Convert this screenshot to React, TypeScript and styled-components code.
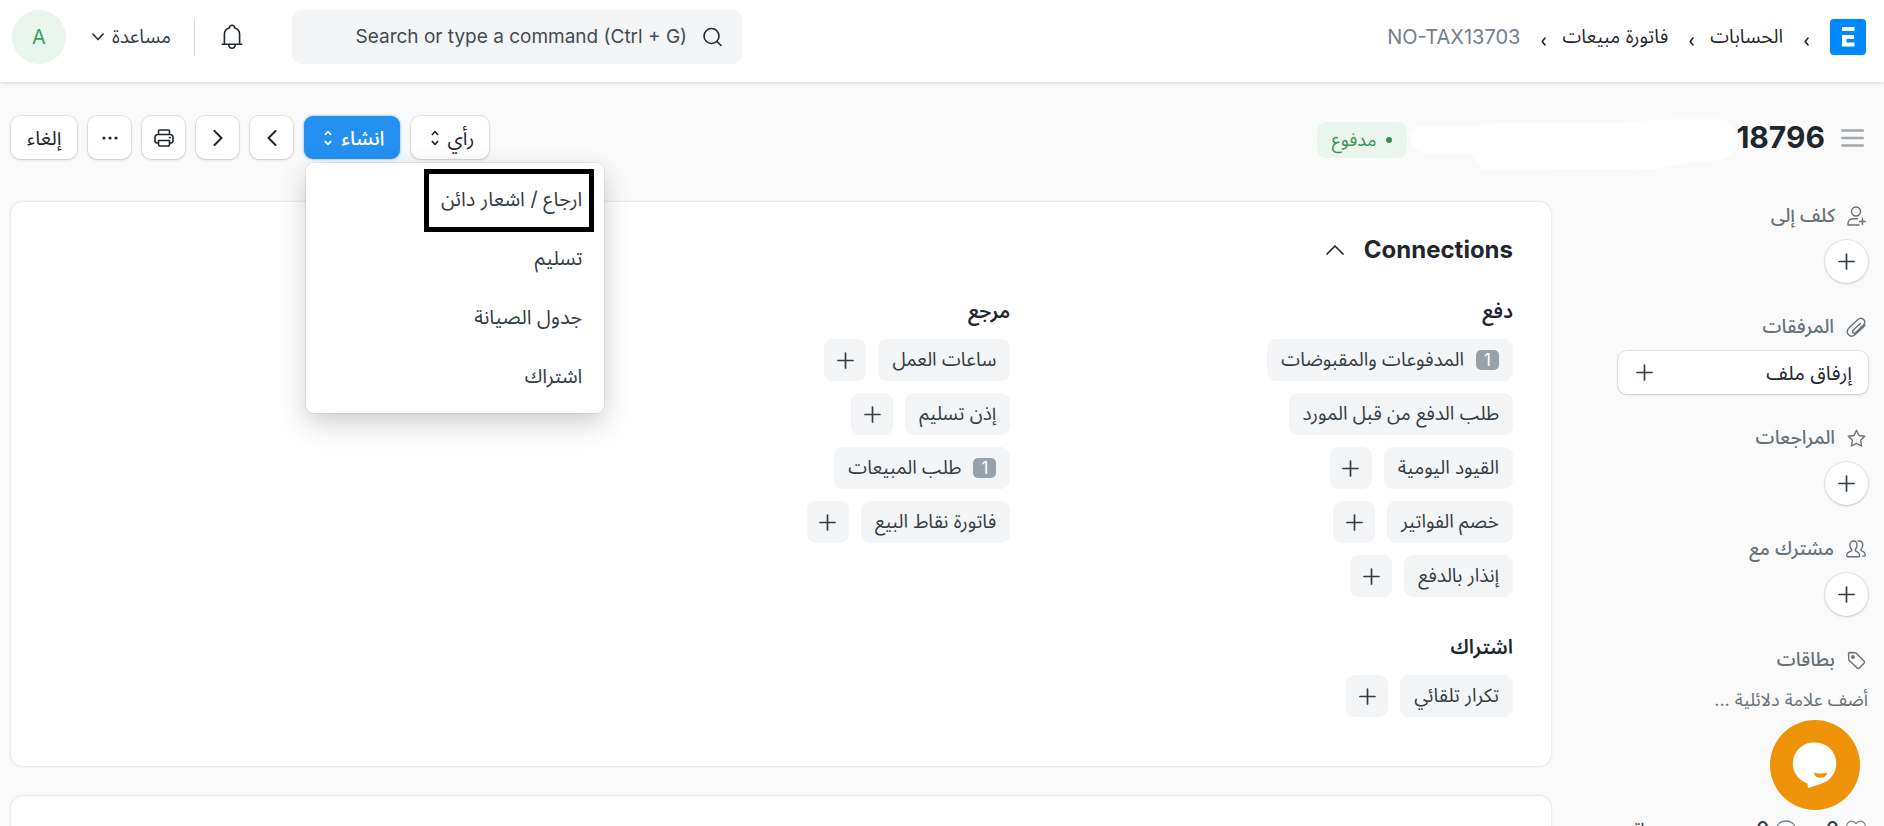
import React from "react";
import styled, { createGlobalStyle } from "styled-components";

const Global = createGlobalStyle`
  *, *::before, *::after { box-sizing: border-box; }
  body {
    margin: 0;
    background: #fafafa;
    color: #1f272e;
    font-family: Inter, "Noto Sans Arabic", "DejaVu Sans", sans-serif;
    font-size: 20px;
    line-height: 24px;
  }
  button, input { font: inherit; color: inherit; }
  button { cursor: pointer; padding: 0; border: 0; background: none; }
  a { color: inherit; text-decoration: none; }
  h1, h2, h3, p, ul { margin: 0; padding: 0; }
  ul { list-style: none; }
  svg { display: block; flex: none; }
`;

const Shell = styled.div`
  height: 100vh;
  overflow: hidden;
`;

const Header = styled.header`
  height: 82px;
  padding: 0 18px 8px 12px;
  display: flex;
  align-items: center;
  justify-content: space-between;
  background: #fff;
  box-shadow: 0 1px 4px rgba(0, 0, 0, 0.14);
`;

const Crumbs = styled.nav`
  display: flex;
  align-items: center;
  gap: 16px;
`;

const Logo = styled.a`
  display: block;
  margin-left: 5px;
`;

const Crumb = styled.a<{ $muted?: boolean }>`
  display: flex;
  align-items: center;
  gap: 21px;
  font-size: ${(p) => (p.$muted ? 20 : 19)}px;
  color: ${(p) => (p.$muted ? "#74808b" : "#1f272e")};
  svg { margin-top: 8px; color: #1f272e; }
`;

const HeaderTools = styled.div`
  display: flex;
  align-items: center;
`;

const SearchBox = styled.label`
  width: 450px;
  height: 54px;
  padding: 0 20px;
  display: flex;
  align-items: center;
  gap: 16px;
  border-radius: 9px;
  background: #f4f5f6;
  color: #1f272e;
`;

const SearchInput = styled.input`
  flex: 1;
  min-width: 0;
  padding: 0;
  border: 0;
  outline: 0;
  background: transparent;
  font-size: 19px;
  text-align: right;
  &::placeholder { color: #434a52; opacity: 1; }
`;

const BellButton = styled.button`
  margin: 0 49px 0 26px;
`;

const Divider = styled.span`
  width: 1px;
  height: 37px;
  background: #d5d9dd;
`;

const HelpButton = styled.button`
  margin: 0 23px 0 26px;
  display: flex;
  align-items: center;
  gap: 8px;
  font-size: 19px;
  color: #333c44;
`;

const Avatar = styled.button`
  width: 54px;
  height: 54px;
  border-radius: 50%;
  background: #eaf5ee;
  color: #38a160;
`;

const TitleBar = styled.div`
  height: 120px;
  padding: 34px 15px 0 11px;
  display: flex;
  align-items: flex-start;
  justify-content: space-between;
`;

const TitleGroup = styled.div`
  height: 43px;
  padding-right: 5px;
  display: flex;
  align-items: flex-start;
`;

const MenuToggle = styled.button`
  height: 43px;
  margin-left: 16px;
`;

const Title = styled.h1`
  font-size: 30px;
  line-height: 43px;
  font-weight: 700;
`;

const Redaction = styled.svg`
  margin: 2px 0 0 4px;
`;

const Status = styled.span`
  height: 36px;
  margin-top: 6px;
  padding: 0 15px;
  display: flex;
  align-items: center;
  gap: 10px;
  border-radius: 9px;
  background: #eaf5ee;
  color: #38915a;
  font-size: 18px;
  &::before {
    content: "";
    width: 6px;
    height: 6px;
    border-radius: 50%;
    background: currentColor;
  }
`;

const Actions = styled.div`
  display: flex;
  gap: 11px;
`;

const raised = `
  background: #fff;
  box-shadow: 0 0 0 1px rgba(0, 0, 0, 0.07), 0 1px 3px rgba(0, 0, 0, 0.14);
`;

const ActionButton = styled.button<{ $primary?: boolean; $caret?: boolean; $icon?: boolean }>`
  ${raised}
  height: 43px;
  min-width: 43px;
  padding: ${(p) => (p.$icon ? "0" : p.$caret ? "0 15px 0 20px" : "0 16px")};
  display: flex;
  align-items: center;
  justify-content: center;
  gap: 9px;
  border-radius: 9px;
  ${(p) =>
    p.$primary &&
    `
    background: #2490ef;
    color: #fff;
    font-weight: 500;
    box-shadow: 0 0 3px rgba(36, 144, 239, 0.7);
  `}
`;

const MenuAnchor = styled.div`
  position: relative;
`;

const Menu = styled.ul`
  position: absolute;
  z-index: 2;
  top: 47px;
  left: 2px;
  width: 298px;
  padding: 7px 0;
  border-radius: 8px;
  background: #fff;
  box-shadow: 0 0 0 1px rgba(0, 0, 0, 0.06), 0 10px 28px rgba(0, 0, 0, 0.2);
`;

const MenuItem = styled.li<{ $marked?: boolean }>`
  position: relative;
  height: 59px;
  ${(p) =>
    p.$marked &&
    `
    &::after {
      content: "";
      position: absolute;
      top: -1px;
      right: 10px;
      width: 170px;
      height: 63px;
      border: 5px solid #000;
      pointer-events: none;
    }
  `}
`;

const MenuLink = styled.a`
  display: block;
  padding: 0 22px;
  line-height: 59px;
  color: #333c44;
`;

const Body = styled.div`
  padding: 0 16px 0 11px;
  display: flex;
  gap: 67px;
`;

const Sidebar = styled.aside`
  width: 250px;
  flex: none;
`;

const SideSection = styled.section`
  height: 111px;
`;

const SideHeading = styled.h2`
  height: 28px;
  margin-bottom: 10px;
  padding-right: 2px;
  display: flex;
  align-items: center;
  gap: 12px;
  color: #687178;
  font-size: 19px;
  font-weight: 500;
`;

const RoundButton = styled.button`
  ${raised}
  width: 43px;
  height: 43px;
  display: flex;
  align-items: center;
  justify-content: center;
  border-radius: 50%;
`;

const AttachButton = styled.button`
  ${raised}
  width: 100%;
  height: 43px;
  padding: 0 16px 0 18px;
  display: flex;
  align-items: center;
  justify-content: space-between;
  border-radius: 9px;
`;

const TagHint = styled.p`
  margin: 14px 0 105px;
  font-size: 18px;
  color: #687178;
`;

const Stats = styled.div`
  display: flex;
  align-items: center;
  padding-right: 2px;
`;

const Stat = styled.button`
  display: flex;
  align-items: center;
  gap: 7px;
  margin-left: 30px;
  color: #74808b;
  b { color: #333c44; font-weight: 500; }
`;

const Follow = styled.button`
  margin-right: auto;
  font-size: 19px;
  color: #333c44;
`;

const Main = styled.main`
  flex: 1;
  min-width: 0;
  display: flex;
  flex-direction: column;
  gap: 30px;
`;

const Card = styled.section`
  min-height: 200px;
  padding: 36px 38px 49px;
  border-radius: 12px;
  background: #fff;
  box-shadow: 0 0 3px rgba(0, 0, 0, 0.16);
`;

const CardToggle = styled.button`
  margin-bottom: 37px;
  display: flex;
  align-items: center;
  gap: 20px;
  font-size: 24px;
  font-weight: 700;
`;

const Columns = styled.div`
  display: grid;
  grid-template-columns: repeat(3, 1fr);
  column-gap: 44px;
  align-items: start;
`;

const Column = styled.div`
  display: grid;
  gap: 38px;
`;

const GroupTitle = styled.h3`
  margin-bottom: 16px;
  font-size: 20px;
  font-weight: 600;
`;

const Links = styled.ul`
  display: grid;
  gap: 12px;
`;

const LinkRow = styled.li`
  display: flex;
  gap: 12px;
`;

const Chip = styled.a`
  height: 42px;
  padding: 0 14px;
  display: flex;
  align-items: center;
  gap: 12px;
  border-radius: 9px;
  background: #f4f5f6;
  color: #333c44;
  font-size: 19px;
`;

const Count = styled.span`
  width: 23px;
  height: 20px;
  border-radius: 5px;
  background: #98a1a9;
  color: #fff;
  font-size: 17px;
  line-height: 20px;
  text-align: center;
`;

const AddButton = styled.button`
  width: 42px;
  height: 42px;
  display: flex;
  align-items: center;
  justify-content: center;
  border-radius: 9px;
  background: #f4f5f6;
`;

const Chat = styled.button`
  position: fixed;
  right: 24px;
  bottom: 16px;
  width: 90px;
  height: 90px;
  border-radius: 50%;
  background: #ee9207;
`;

type IconProps = { w: number; h: number; sw?: number; children: React.ReactNode };
const Icon = ({ w, h, sw = 1.5, children }: IconProps) => (
  <svg
    width={w}
    height={h}
    viewBox={`0 0 ${w} ${h}`}
    fill="none"
    stroke="currentColor"
    strokeWidth={sw}
    strokeLinecap="round"
    strokeLinejoin="round"
    aria-hidden="true"
  >
    {children}
  </svg>
);

const Plus = () => (
  <Icon w={17} h={17} sw={1.7}>
    <path d="M8.5 1v15M1 8.500h15" stroke="#333c44" />
  </Icon>
);
const Sort = () => (
  <Icon w={8} h={16} sw={1.7}>
    <path d="M1.300 4.500L4 1.700l2.700 2.800M1.300 11.500L4 14.300l2.700-2.800" />
  </Icon>
);
const CrumbArrow = () => (
  <Icon w={5} h={9} sw={1.6}>
    <path d="M4 1L1.200 4.500 4 8" />
  </Icon>
);
const Bell = () => (
  <Icon w={22} h={26} sw={1.6}>
    <path d="M1.200 20.300h19.600M3.400 20V10.400c0-3.200 2-5.600 4.900-6.400C8.500 2.300 9.500 1.200 11 1.200s2.500 1.100 2.700 2.800c2.900.8 4.900 3.200 4.900 6.400V20M7.600 20.700c.3 2 1.600 3.600 3.400 3.600s3.100-1.600 3.400-3.600" />
  </Icon>
);
const Printer = () => (
  <Icon w={20} h={18} sw={1.6}>
    <path d="M4.500 5.500V2a1 1 0 0 1 1-1h9a1 1 0 0 1 1 1v3.500M4.500 14H3a2.200 2.200 0 0 1-2-2.200V8.500a3 3 0 0 1 3-3h12a3 3 0 0 1 3 3v3.300A2.200 2.200 0 0 1 17 14h-1.500M4.500 11.500h11v4a1.500 1.500 0 0 1-1.500 1.500H6a1.500 1.500 0 0 1-1.500-1.500zM15.500 8.600h.8" />
  </Icon>
);
const AssignIcon = () => (
  <Icon w={19} h={20} sw={1.4}>
    <circle cx="9" cy="5.500" r="4.500" />
    <path d="M12 19H1v-1.500C1 14.500 3.500 12.700 6.500 12.700h4M15.500 12.500v6M12.500 15.500h6" />
  </Icon>
);
const ClipIcon = () => (
  <Icon w={20} h={20} sw={1.4}>
    <path d="M14.300 6.400l-7 6.600c-.9.9-.9 2 -.2 2.700s1.800.6 2.700-.2l7.300-6.900c2-1.900 2.100-4.300.5-6s-4.100-1.500-6.100.3L3.300 10.500c-2.600 2.500-2.700 5.300-.8 7.200s4.900 1.800 7.400-.6l9-8.500" />
  </Icon>
);
const StarIcon = () => (
  <Icon w={19} h={19} sw={1.4}>
    <path d="M9.500 1.300l2.500 5.200 5.700.8-4.100 4 1 5.700-5.100-2.700L4.400 17l1-5.700-4.100-4 5.700-.8z" />
  </Icon>
);
const PeopleIcon = () => (
  <Icon w={20} h={18} sw={1.4}>
    <path d="M7.500 1C5.200 1 3.900 2.700 3.900 5c0 1.800.5 3.200 1.500 4.200.6.700.4 1.600-.4 2l-2.600 1.200C1.300 13 .8 14 .8 15.500c0 1 .4 1.200 1 1.200h10.800c.7 0 1-.3 1-1.200 0-1.500-.5-2.500-1.600-3.100l-2-1.200c-.9-.4-1-1.300-.5-2 1-1 1.500-2.400 1.500-4.200 0-2.300-1.200-4-3.500-4zM12 1.200c.5-.2 1-.2 1.400-.2 2 0 3.300 1.600 3.300 3.900 0 1.700-.5 3-1.400 4-.6.7-.3 1.600.4 2l1.900 1c1.100.6 1.600 1.600 1.600 3 0 .9-.4 1.200-1 1.200h-1.700" />
  </Icon>
);
const TagIcon = () => (
  <Icon w={19} h={19} sw={1.4}>
    <path d="M1.500 2.500a1 1 0 0 1 1-1l5.600.3c.5 0 .9.200 1.200.5l7.700 7.600a1.600 1.600 0 0 1 0 2.300l-4.600 4.800a1.600 1.600 0 0 1-2.300 0L2.300 9.600c-.4-.4-.5-.8-.5-1.200z" />
    <circle cx="6" cy="6" r="1.200" fill="currentColor" />
  </Icon>
);

type Entry = { label: string; count?: number; add?: boolean };
const columns: { title: string; entries: Entry[] }[][] = [
  [
    {
      title: "دفع",
      entries: [
        { label: "المدفوعات والمقبوضات", count: 1 },
        { label: "طلب الدفع من قبل المورد" },
        { label: "القيود اليومية", add: true },
        { label: "خصم الفواتير", add: true },
        { label: "إنذار بالدفع", add: true },
      ],
    },
    { title: "اشتراك", entries: [{ label: "تكرار تلقائي", add: true }] },
  ],
  [
    {
      title: "مرجع",
      entries: [
        { label: "ساعات العمل", add: true },
        { label: "إذن تسليم", add: true },
        { label: "طلب المبيعات", count: 1 },
        { label: "فاتورة نقاط البيع", add: true },
      ],
    },
  ],
];

const menuItems = ["ارجاع / اشعار دائن", "تسليم", "جدول الصيانة", "اشتراك"];

export default function App() {
  return (
    <Shell dir="rtl" lang="ar">
      <Global />
      <Header>
        <Crumbs>
          <Logo href="#" aria-label="ERPNext">
            <svg width="36" height="36" viewBox="0 0 36 36">
              <rect width="36" height="36" rx="4" fill="#0089ff" />
              <path d="M12 8h12.500v4H12zM12 16h12v4h-7.500v3.500h8v4H12z" fill="#fff" />
            </svg>
          </Logo>
          <Crumb href="#"><CrumbArrow />الحسابات</Crumb>
          <Crumb href="#"><CrumbArrow />فاتورة مبيعات</Crumb>
          <Crumb href="#" $muted><CrumbArrow />NO-TAX13703</Crumb>
        </Crumbs>
        <HeaderTools>
          <SearchBox>
            <Icon w={19} h={20} sw={1.6}>
              <circle cx="8.500" cy="9" r="7.500" />
              <path d="M14 14.500l4 4" />
            </Icon>
            <SearchInput dir="ltr" placeholder="Search or type a command (Ctrl + G)" aria-label="Search" />
          </SearchBox>
          <BellButton aria-label="Notifications"><Bell /></BellButton>
          <Divider />
          <HelpButton>
            مساعدة
            <Icon w={12} h={8} sw={1.7}><path d="M1 1.200l5 5.300 5-5.300" /></Icon>
          </HelpButton>
          <Avatar>A</Avatar>
        </HeaderTools>
      </Header>

      <TitleBar>
        <TitleGroup>
          <MenuToggle aria-label="Toggle sidebar">
            <svg width="23" height="18" viewBox="0 0 23 18" stroke="#a3a8ae" strokeWidth="2.400" strokeLinecap="round">
              <path d="M1.200 1.500h20.600M1.200 9h20.600M1.200 16.500h20.600" />
            </svg>
          </MenuToggle>
          <Title>18796</Title>
          <Redaction width="325" height="52" viewBox="38 54 976 156" aria-hidden="true">
            <path
              fill="#fff"
              d="M38 118C38 92 50 78 76 76L230 77C260 70 300 69 330 69L690 68C740 58 820 57 960 58C1000 60 1012 80 1013 110C1014 150 1002 172 950 182C900 188 850 188 800 202C760 212 700 208 640 207L260 209C238 208 232 180 218 163L90 161C56 156 38 144 38 118Z"
            />
          </Redaction>
          <Status>مدفوع</Status>
        </TitleGroup>
        <Actions>
          <ActionButton $caret>رأي<Sort /></ActionButton>
          <MenuAnchor>
            <ActionButton $primary $caret aria-expanded="true">انشاء<Sort /></ActionButton>
            <Menu>
              {menuItems.map((item, i) => (
                <MenuItem key={item} $marked={i === 0}>
                  <MenuLink href="#">{item}</MenuLink>
                </MenuItem>
              ))}
            </Menu>
          </MenuAnchor>
          <ActionButton $icon aria-label="Previous">
            <Icon w={10} h={16} sw={2}><path d="M8.500 1L1.500 8l7 7" /></Icon>
          </ActionButton>
          <ActionButton $icon aria-label="Next">
            <Icon w={10} h={16} sw={2}><path d="M1.500 1l7 7-7 7" /></Icon>
          </ActionButton>
          <ActionButton $icon aria-label="Print"><Printer /></ActionButton>
          <ActionButton $icon aria-label="More">
            <svg width="16" height="4" viewBox="0 0 16 4" fill="currentColor">
              <circle cx="2" cy="2" r="1.600" /><circle cx="8" cy="2" r="1.600" /><circle cx="14" cy="2" r="1.600" />
            </svg>
          </ActionButton>
          <ActionButton>إلغاء</ActionButton>
        </Actions>
      </TitleBar>

      <Body>
        <Sidebar>
          <SideSection>
            <SideHeading><AssignIcon />كلف إلى</SideHeading>
            <RoundButton aria-label="كلف إلى"><Plus /></RoundButton>
          </SideSection>
          <SideSection>
            <SideHeading><ClipIcon />المرفقات</SideHeading>
            <AttachButton>إرفاق ملف<Plus /></AttachButton>
          </SideSection>
          <SideSection>
            <SideHeading><StarIcon />المراجعات</SideHeading>
            <RoundButton aria-label="المراجعات"><Plus /></RoundButton>
          </SideSection>
          <SideSection>
            <SideHeading><PeopleIcon />مشترك مع</SideHeading>
            <RoundButton aria-label="مشترك مع"><Plus /></RoundButton>
          </SideSection>
          <SideHeading><TagIcon />بطاقات</SideHeading>
          <TagHint>أضف علامة دلائلية ...</TagHint>
          <Stats>
            <Stat>
              <Icon w={20} h={18} sw={1.3}>
                <path d="M10 17L2.500 9.500C.5 7.300.5 4.300 2.300 2.500s4.800-1.900 6.600 0L10 3.600l1.100-1.100c1.800-1.900 4.800-1.800 6.600 0s1.800 4.800-.2 7z" />
              </Icon>
              <b>0</b>
            </Stat>
            <Stat>
              <Icon w={20} h={18} sw={1.3}>
                <path d="M10 1c5 0 9 2.800 9 7s-4 7-9 7c-1 0-2-.1-3-.4L3 17v-4c-1.300-1.300-2-3-2-5 0-4.200 4-7 9-7z" />
              </Icon>
              <b>0</b>
            </Stat>
            <Follow>إتبع</Follow>
          </Stats>
        </Sidebar>

        <Main>
          <Card>
            <CardToggle aria-expanded="true">
              Connections
              <Icon w={18} h={10} sw={1.7}><path d="M1 9l8-8 8 8" /></Icon>
            </CardToggle>
            <Columns>
              {columns.map((groups, c) => (
                <Column key={c}>
                  {groups.map((group) => (
                    <section key={group.title}>
                      <GroupTitle>{group.title}</GroupTitle>
                      <Links>
                        {group.entries.map((e) => (
                          <LinkRow key={e.label}>
                            <Chip href="#">
                              {e.count && <Count>{e.count}</Count>}
                              {e.label}
                            </Chip>
                            {e.add && <AddButton aria-label={`إضافة ${e.label}`}><Plus /></AddButton>}
                          </LinkRow>
                        ))}
                      </Links>
                    </section>
                  ))}
                </Column>
              ))}
            </Columns>
          </Card>
          <Card />
        </Main>
      </Body>

      <Chat aria-label="Chat">
        <svg width="90" height="90" viewBox="0 0 90 90">
          <path d="M45 22.500a21 21 0 0 1 8.500 40.300c-5 2.100-10 3.600-15.500 5.200l-.5-4.500A21 21 0 0 1 45 22.500z" fill="#fff" />
          <path d="M43.500 52.800q7 1.400 14 0-1.800 5-7 5t-7-5z" fill="#ee9207" />
        </svg>
      </Chat>
    </Shell>
  );
}
